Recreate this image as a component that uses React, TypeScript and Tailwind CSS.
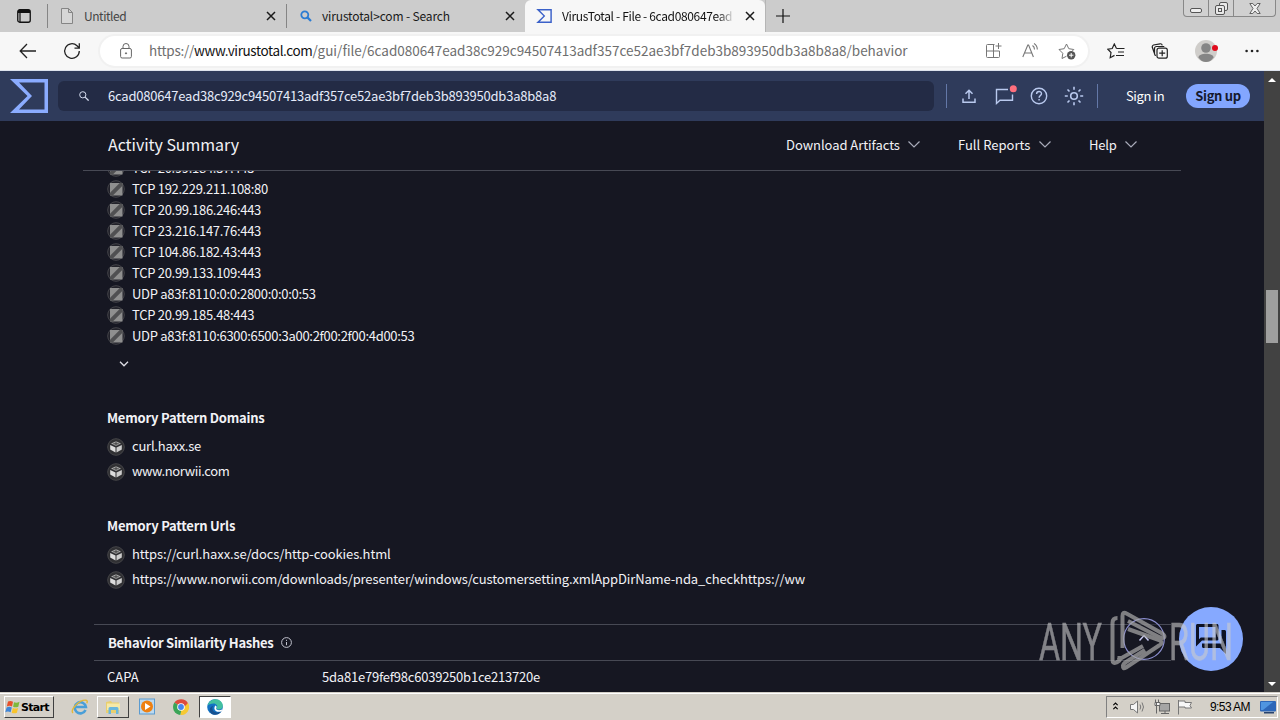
import { ReactElement, ReactNode } from 'react';
import clsx from 'clsx';

const contacted = [
  'TCP 20.99.184.37:443',
  'TCP 192.229.211.108:80',
  'TCP 20.99.186.246:443',
  'TCP 23.216.147.76:443',
  'TCP 104.86.182.43:443',
  'TCP 20.99.133.109:443',
  'UDP a83f:8110:0:0:2800:0:0:0:53',
  'TCP 20.99.185.48:443',
  'UDP a83f:8110:6300:6500:3a00:2f00:2f00:4d00:53',
];

function Close(): ReactElement {
  return (
    <svg className="h-2.5 w-2.5 shrink-0" viewBox="0 0 10 10" fill="none" stroke="#1a1a1a" strokeWidth="1.5">
      <path d="M1 1l8 8M9 1l-8 8" />
    </svg>
  );
}

function VtMark({ className }: { className: string }): ReactElement {
  return (
    <svg className={className} viewBox="0 0 38 34" fill="currentColor">
      <path fillRule="evenodd" d="M0 0h38v34H0l17.5-17zM9 3.5L22 17 9 30.500h25.500V3.500z" />
    </svg>
  );
}

function TabBar(): ReactElement {
  return (
    <div className="flex h-8 shrink-0 bg-[#cccccc] text-[12px] leading-none">
      <div className="flex w-[47px] items-center pl-[17px]">
        <svg className="h-3.5 w-3.5" viewBox="0 0 14 14" fill="none" stroke="#111">
          <rect x=".75" y=".75" width="12.500" height="12.500" rx="2" strokeWidth="1.300" />
          <path d="M1 2.500h12" strokeWidth="3" />
          <path d="M3 4v9" strokeWidth="1.200" />
        </svg>
      </div>
      <div className="flex w-[240px] items-center self-center border-x border-[#858585] py-1 pr-[10px] pl-3">
        <svg className="h-4 w-3.5" viewBox="0 0 14 16" fill="#d6d6d6" stroke="#858585">
          <path d="M1.500.5h7l4 4v11h-11zM8.500.5v4h4" />
        </svg>
        <span className="-mt-px ml-[10px] flex-1 tracking-[-0.45px] text-[#444]">Untitled</span>
        <Close />
      </div>
      <div className="flex w-[238px] items-center pr-[10px] pl-[13px]">
        <svg className="h-3 w-3" viewBox="0 0 12 12" fill="none" stroke="#2b7cd3" strokeWidth="1.800">
          <circle cx="4.800" cy="4.800" r="3.500" />
          <path d="M7.400 7.400l3.600 3.600" strokeWidth="2.200" />
        </svg>
        <span className="-mt-px ml-[10px] flex-1 tracking-[-0.15px] text-[#1a1a1a]">virustotal&gt;com - Search</span>
        <Close />
      </div>
      <div className="flex w-[240px] items-center rounded-t-md bg-[#f7f7f7] pr-[10px] pl-[11px]">
        <VtMark className="h-3.5 w-4 text-[#3b61c9]" />
        <span className="-mt-px ml-[10px] w-[173px] bg-gradient-to-r from-[#111] from-90% to-transparent bg-clip-text leading-5 tracking-[-0.35px] whitespace-nowrap text-transparent">
          VirusTotal - File - 6cad080647ead
        </span>
        <span className="ml-auto flex">
          <Close />
        </span>
      </div>
      <div className="flex flex-1 items-center border-l border-[#b5b5b5] pl-[10px]">
        <svg className="h-3.5 w-3.5" viewBox="0 0 14 14" stroke="#111" strokeWidth="1.200">
          <path d="M7 0v14M0 7h14" />
        </svg>
      </div>
      <div className="mr-[4px] flex h-[17px] w-[93px] rounded-b border border-t-0 border-[#888] bg-[#d0d0d0]">
        <div className="flex w-[25px] items-center justify-center border-r border-[#888]">
          <svg className="mt-1 h-[5px] w-3" viewBox="0 0 12 5" fill="#eee" stroke="#555">
            <rect x=".5" y=".5" width="11" height="4" rx="1.500" />
          </svg>
        </div>
        <div className="flex w-[25px] items-center justify-center border-r border-[#888]">
          <svg className="h-[13px] w-[13px]" viewBox="0 0 13 13" fill="#e8e8e8" stroke="#555">
            <rect x="4.500" y=".5" width="8" height="8" rx="1.500" />
            <rect x=".5" y="3.500" width="9" height="9" rx="1.500" />
            <rect x="3.500" y="6.500" width="3" height="3" />
          </svg>
        </div>
        <div className="flex flex-1 items-center justify-center">
          <svg className="h-[11px] w-[12px]" viewBox="0 0 12 11" fill="#eee" stroke="#555" strokeWidth=".9">
            <path d="M.8.500h3L6 3 8.200.500h3L8 5.500l3.200 5h-3L6 8l-2.200 2.500h-3L4 5.500z" />
          </svg>
        </div>
      </div>
    </div>
  );
}

function Toolbar(): ReactElement {
  return (
    <div className="flex h-[39px] shrink-0 items-center border-b border-[#dde3ee] bg-[#f7f7f7]">
      <svg className="ml-[19px] h-4 w-[18px]" viewBox="0 0 18 16" fill="none" stroke="#222" strokeWidth="1.300">
        <path d="M17 8H1.500M8 1L1.200 8 8 15" />
      </svg>
      <svg className="ml-[26px] h-[18px] w-[18px]" viewBox="0 0 18 18" fill="none" stroke="#222" strokeWidth="1.300">
        <path d="M16.300 9a7.300 7.300 0 1 1-2.300-5.300l2.200 2.200M16.300 1.200v4.900h-4.800" />
      </svg>
      <div className="ml-[19px] flex h-[30px] w-[988px] items-center rounded-full bg-white pl-5 ring-2 ring-[#f1f1f1]">
        <svg className="h-4 w-3" viewBox="0 0 12 16" fill="none" stroke="#666">
          <rect x=".6" y="5.500" width="10.800" height="9.500" rx="1.500" />
          <path d="M3 5.500v-2a3 3 0 0 1 6 0v2" />
          <circle cx="6" cy="10.300" r=".6" fill="#555" />
        </svg>
        <div className="ml-[17px] flex-1 text-[13.5px] leading-none whitespace-nowrap text-[#6e6e6e]">
          <span className="tracking-[-0.25px]">https://</span>
          <span className="tracking-[-0.38px] text-[#111]">www.virustotal.com</span>
          <span>/gui/file/6cad080647ead38c929c94507413adf357ce52ae3bf7deb3b893950db3a8b8a8/behavior</span>
        </div>
        <svg className="h-4 w-4" viewBox="0 0 16 16" fill="none" stroke="#777">
          <path d="M8.500 1.500h-7a1 1 0 0 0-1 1v11a1 1 0 0 0 1 1h11a1 1 0 0 0 1-1V8M.500 8h13M7.500 1.500v13M12.500 0v6M9.500 3h6" />
        </svg>
        <svg className="ml-5 h-4 w-[17px]" viewBox="0 0 17 16" fill="none" stroke="#777" strokeWidth="1.100">
          <path d="M.800 14L5.800 2h.800l4.800 12M2.600 10h7.200M10.500 2.500c1.500 1 2 2.200 2 4M12 .500c2.300 1.300 3.300 3.200 3.300 6" />
        </svg>
        <svg className="mr-3 ml-[19px] h-[18px] w-[18px]" viewBox="0 0 18 18" fill="none" stroke="#777">
          <path d="M8.500 14.200L4 16.500l.800-5.200L1 7.500l5.200-.8L8.500 2l2.300 4.700 5 .8-1.500 1.500" />
          <circle cx="13.200" cy="13.200" r="4.200" fill="#555" stroke="none" />
          <path d="M13.200 11v4.400M11 13.200h4.400" stroke="#fff" />
        </svg>
      </div>
      <svg className="ml-[19px] h-4 w-[18px]" viewBox="0 0 18 16" fill="none" stroke="#222" strokeWidth="1.200">
        <path d="M9.500 5.500L7.300 1 5.200 5.500.800 6.200 4 9.500 3.200 14.700l4.300-2.300M9.500 5.500h8M11 9h6M9 12.500h8" />
      </svg>
      <svg className="ml-[26px] h-4 w-[17px]" viewBox="0 0 17 16" fill="none" stroke="#222" strokeWidth="1.200">
        <path d="M3.500 10.500L1.300 4.300A2 2 0 0 1 2.500 2L9 .800c1.300-.2 2 .4 2.300 1.500M5 12.500c-1 0-1.500-1-1.500-2v-5a2 2 0 0 1 2-2h7.800" />
        <rect x="6" y="5.200" width="10.300" height="10" rx="2" />
        <path d="M11.200 7.200v6M8.200 10.200h6" />
      </svg>
      <svg className="ml-[27px] h-[22px] w-[23px]" viewBox="0 0 23 22">
        <circle cx="11" cy="11" r="11" fill="#cfcdca" />
        <circle cx="11" cy="8" r="4.800" fill="#858585" />
        <path d="M3.500 17.500c0-5 15-5 15 0C16.500 20.500 14 22 11 22s-5.500-1.500-7.500-4.500z" fill="#858585" />
        <circle cx="20" cy="8" r="3" fill="#e00b1c" />
      </svg>
      <svg className="ml-[27px] h-1 w-[14px]" viewBox="0 0 14 4" fill="#222">
        <circle cx="1.600" cy="2" r="1.300" />
        <circle cx="7" cy="2" r="1.300" />
        <circle cx="12.400" cy="2" r="1.300" />
      </svg>
    </div>
  );
}

function VtHeader(): ReactElement {
  return (
    <div className="flex h-[50px] shrink-0 items-center bg-[#2f3b5b] text-[13px] leading-none">
      <VtMark className="ml-[10px] h-[34px] w-[38px] text-[#8bacff]" />
      <div className="ml-[10px] flex h-[30px] w-[876px] items-center rounded-md bg-[#232b45] pl-[21px]">
        <svg className="h-[10px] w-[10px]" viewBox="0 0 10 10" fill="none" stroke="#d5dcef">
          <circle cx="3.800" cy="3.800" r="3.100" />
          <path d="M6.100 6.100l3.500 3.500" strokeWidth="1.300" />
        </svg>
        <span className="-mt-0.5 ml-[19px] tracking-[-0.21px] text-[#e6ebfa]">
          6cad080647ead38c929c94507413adf357ce52ae3bf7deb3b893950db3a8b8a8
        </span>
      </div>
      <div className="ml-3 h-6 w-px bg-[#6478a8]" />
      <svg className="ml-[15px] h-[14px] w-[14px]" viewBox="0 0 14 14" fill="none" stroke="#b9c9ee" strokeWidth="1.500">
        <path d="M7 10V1.500M3.500 4.800L7 1.300l3.500 3.500M1 9.500v3.700h12V9.500" />
      </svg>
      <svg className="ml-[19px] h-5 w-[22px] overflow-visible" viewBox="0 0 22 20" fill="none" stroke="#b9c9ee" strokeWidth="1.400">
        <path d="M13 3.500H1.500v14L5 14.200h12.500V8.500" />
        <circle cx="18.300" cy="2.800" r="3.500" fill="#ff6f7d" stroke="none" />
      </svg>
      <svg className="ml-[13px] h-[18px] w-[18px]" viewBox="0 0 18 18" fill="none" stroke="#b9c9ee" strokeWidth="1.400">
        <circle cx="9" cy="9" r="7.700" />
        <path d="M6.600 7c0-3.300 4.900-3.200 4.900-.3 0 1.800-2.400 1.900-2.400 4.100M9.100 12v1.600" />
      </svg>
      <svg className="ml-4 h-5 w-5" viewBox="0 0 20 20" fill="none" stroke="#b9c9ee" strokeWidth="1.600">
        <circle cx="10" cy="10" r="3.300" />
        <path d="M10 .800v3M10 16.200v3M.800 10h3M16.200 10h3M3.500 3.500l2 2M14.500 14.500l2 2M16.500 3.500l-2 2M5.500 14.500l-2 2" />
      </svg>
      <div className="ml-[13px] h-6 w-px bg-[#6478a8]" />
      <span className="-mt-0.5 ml-[28px] w-[38px] tracking-[-0.4px] whitespace-nowrap text-white">Sign in</span>
      <div className="ml-[22px] flex h-6 w-16 items-center justify-center rounded-full bg-[#83a6ff] pb-0.5 font-bold tracking-[-0.35px] whitespace-nowrap text-[#15192d]">
        Sign up
      </div>
    </div>
  );
}

function MenuItem({ label, className }: { label: string; className: string }): ReactElement {
  return (
    <div className={clsx('flex items-center justify-between whitespace-nowrap', className)}>
      <span className="-mt-0.5">{label}</span>
      <svg className="-mt-0.5 h-[7px] w-3" viewBox="0 0 12 7" fill="none" stroke="#a9acba" strokeWidth="1.200">
        <path d="M.500.500L6 6 11.500.500" />
      </svg>
    </div>
  );
}

function SignatureIcon(): ReactElement {
  return (
    <svg className="h-[18px] w-[18px] shrink-0" viewBox="0 0 18 18">
      <circle cx="9" cy="9" r="8.300" fill="#22222a" stroke="#45454a" />
      <rect x="3" y="3" width="12.500" height="12.500" fill="#8f8f8f" />
      <path d="M3 15.500v-2.800L12.700 3h2.800v2.800L5.800 15.500z" fill="#505052" />
    </svg>
  );
}

function CubeIcon(): ReactElement {
  return (
    <svg className="h-[18px] w-[18px] shrink-0" viewBox="0 0 18 18">
      <circle cx="9" cy="9" r="8.300" fill="#303033" stroke="#454548" />
      <path d="M9 3.200l5 2.300L9 8 4 5.500z" fill="#a8a8a8" />
      <path d="M3.200 7l5.300 2.600v4.900L3.200 11.500z" fill="#dcdcdc" />
      <path d="M14.800 7L9.500 9.600v4.900l5.300-3z" fill="#cdcdcd" />
      <path d="M9 3.500v4M6.300 5.800h5.400" stroke="#444" />
    </svg>
  );
}

function PatternRow({ children }: { children: ReactNode }): ReactElement {
  return (
    <div className="flex h-[25px] items-center gap-[7px] whitespace-nowrap">
      <CubeIcon />
      {children}
    </div>
  );
}

function Watermark(): ReactElement {
  return (
    <svg className="absolute top-[485px] left-[1035px] h-[70px] w-[205px]" viewBox="1035 606 205 70">
      <g fill="#cccccc" stroke="#cccccc" strokeWidth=".5" opacity=".6" fontFamily="Roboto, sans-serif" fontSize="51.500">
        <text x="1039" y="659.500" textLength="63" lengthAdjust="spacingAndGlyphs">ANY</text>
        <text x="1169" y="659.500" textLength="64" lengthAdjust="spacingAndGlyphs">RUN</text>
      </g>
      <g fill="none" stroke="#a8a8a8" strokeWidth="4" strokeLinejoin="round" opacity=".72">
        <path d="M1117.500 618q-5 0-5 5v37q0 4 4 2.500l3-2V656" />
        <path d="M1122.500 648v-32q0-5 4-2.500l35 19.500q4 2.500 2.500 4.500-2 1.500-5-.5l-31-16" />
        <path d="M1118 660l25-14M1128 629l31 11q5 2.500 0 5.500l-33 22q-3.500 2-3-1.500 0-2 3-4l19-12" />
      </g>
    </svg>
  );
}

function Report(): ReactElement {
  return (
    <div className="relative flex-1 overflow-hidden bg-[#161722] text-[13px] leading-none text-[#f2f2f6]">
      <div className="ml-[83px] flex h-[50px] w-[1098px] items-center border-b border-[#474954] pl-[25px]">
        <span className="-mt-[3px] w-[678px] text-[16px] tracking-[-0.05px]">Activity Summary</span>
        <MenuItem label="Download Artifacts" className="w-[134px] tracking-[-0.05px]" />
        <MenuItem label="Full Reports" className="ml-[38px] w-[93px]" />
        <MenuItem label="Help" className="ml-[38px] w-12 tracking-[-0.2px]" />
      </div>
      <div className="overflow-hidden pl-[107px]">
        <div className="-mt-[14px]">
          {contacted.map((entry) => (
            <div key={entry} className="flex h-[21px] items-center gap-[7px] tracking-[-0.29px] whitespace-nowrap">
              <SignatureIcon />
              <span className="-mt-px">{entry}</span>
            </div>
          ))}
        </div>
        <svg className="mt-[15px] ml-[12px] h-[6px] w-[10px]" viewBox="0 0 10 6" fill="none" stroke="#dedee6" strokeWidth="1.300">
          <path d="M1 .800l4 4 4-4" />
        </svg>
        <h2 className="mt-[41px] mb-[6px] leading-5 font-bold tracking-[-0.22px]">Memory Pattern Domains</h2>
        <PatternRow>
          <span className="-mt-0.5 tracking-[-0.23px]">curl.haxx.se</span>
        </PatternRow>
        <PatternRow>
          <span className="-mt-0.5 tracking-[-0.38px]">www.norwii.com</span>
        </PatternRow>
        <h2 className="mt-8 mb-[6px] leading-5 font-bold tracking-[-0.2px]">Memory Pattern Urls</h2>
        <PatternRow>
          <span className="-mt-0.5 tracking-[-0.11px]">https://curl.haxx.se/docs/http-cookies.html</span>
        </PatternRow>
        <PatternRow>
          <span className="-mt-0.5 tracking-[-0.127px]">
            https://www.norwii.com/downloads/presenter/windows/customersetting.xmlAppDirName-nda_checkhttps://ww
          </span>
        </PatternRow>
      </div>
      <div className="mt-8 ml-[94px] w-[1077px] border-t border-[#474954]">
        <div className="flex h-9 items-center border-b border-[#474954] pl-[14px] font-bold tracking-[-0.28px]">
          Behavior Similarity Hashes
          <svg className="ml-2 h-[11px] w-[11px]" viewBox="0 0 11 11" fill="none" stroke="#c3c4cf">
            <circle cx="5.500" cy="5.500" r="4.900" />
            <path d="M5.500 5v3.200M5.500 2.800v1.100" />
          </svg>
        </div>
        <div className="flex h-[30px] items-center pl-[13px]">
          <span className="w-[215px]">CAPA</span>
          <span className="tracking-[-0.22px]">5da81e79fef98c6039250b1ce213720e</span>
        </div>
      </div>

      <svg className="absolute top-[497px] left-[1123px] h-[42px] w-[42px]" viewBox="0 0 42 42" fill="none">
        <circle cx="21" cy="21" r="20.300" fill="#161722" fillOpacity=".5" stroke="#8c8fd0" strokeWidth="1.200" />
        <path d="M16.500 22.500L21 17.500l4.500 5" stroke="#c9cbf5" strokeWidth="1.500" />
      </svg>
      <div className="absolute top-[486px] left-[1179px] flex h-16 w-16 items-center justify-center rounded-full bg-[#86a9ff]">
        <svg className="h-9 w-9" viewBox="0 0 24 24" fill="#0d1224">
          <path d="M15 4v7H5.170L4 12.170V4h11m1-2H3c-.55 0-1 .45-1 1v14l4-4h10c.55 0 1-.45 1-1V3c0-.55-.45-1-1-1zm5 4h-2v9H6v2c0 .55.45 1 1 1h11l4 4V7c0-.55-.45-1-1-1z" />
        </svg>
      </div>
      <Watermark />
    </div>
  );
}

function Scrollbar(): ReactElement {
  return (
    <div className="flex w-4 shrink-0 flex-col items-center bg-[#424242]">
      <svg className="mt-[7px] h-1 w-2" viewBox="0 0 8 4" fill="#fff">
        <path d="M4 0l4 4H0z" />
      </svg>
      <div className="mt-[208px] h-[53px] w-3 bg-[#9f9f9f]" />
      <svg className="mt-auto mb-[6px] h-1 w-2" viewBox="0 0 8 4" fill="#fff">
        <path d="M0 0h8L4 4z" />
      </svg>
    </div>
  );
}

function Taskbar(): ReactElement {
  return (
    <div className="flex h-7 shrink-0 items-center border-t border-[#d4d0c8] bg-[#d4d0c8] font-['Liberation_Sans',sans-serif] text-black shadow-[inset_0_1px_0_#fff]">
      <div className="mt-[1px] ml-1 flex h-[22px] w-[50px] items-center border border-t-white border-r-[#404040] border-b-[#404040] border-l-white">
        <svg className="h-4 w-4 shrink-0" viewBox="0 0 16 16">
          <path d="M3 2.500q2.500-1.200 5 .2L7 7.500q-2.500-1.300-5.200 0z" fill="#e8502a" />
          <path d="M9 3.200q2.500 1.200 5.500-.5l-1.200 5q-2.600 1.300-5.200 0z" fill="#7eb83a" />
          <path d="M1.600 8.500q2.600-1.300 5.200 0l-1.200 4.800Q3 12 .300 13.200z" fill="#3f86d8" />
          <path d="M7.900 9q2.500 1.200 5.200 0l-1.200 4.700q-2.600 1.300-5.200 0z" fill="#f8c42c" />
        </svg>
        <span className="font-['DejaVu_Sans',sans-serif] text-[11px] leading-none font-bold tracking-[-0.7px]">Start</span>
      </div>
      <svg className="ml-[17px] h-[18px] w-[18px]" viewBox="0 0 18 18" fill="none">
        <path d="M14.500 12a5.600 5.600 0 1 1 .4-3H5" stroke="#4a9fd8" strokeWidth="2.600" />
        <path d="M2 15C-1 12 8 1.500 15 2.200q2 .3.800 3" stroke="#e3b83a" strokeWidth="1.400" />
      </svg>
      <div className="mt-[1px] ml-2 flex h-[22px] w-8 items-center justify-center border border-t-white border-r-[#404040] border-b-[#404040] border-l-white">
        <svg className="h-4 w-4" viewBox="0 0 16 16">
          <path d="M1 3l5-1 1 1.500h7V14H1z" fill="#e9cf6e" />
          <path d="M2 4.500h13V11H2z" fill="#f6e9a8" />
          <path d="M3.500 15V9.500q0-1.500 1.500-1.500h7q1.500 0 1.500 1.500V15H11v-4H6v4z" fill="#6ab7dd" />
        </svg>
      </div>
      <svg className="ml-[10px] h-[17px] w-4" viewBox="0 0 16 17">
        <rect x=".5" y="1" width="15" height="15" fill="#bcd9f0" stroke="#5b9bd0" />
        <circle cx="8" cy="8.500" r="6" fill="#ee8012" />
        <path d="M6 5l5.500 3.500L6 12z" fill="#fff" />
      </svg>
      <svg className="ml-[18px] h-4 w-4" viewBox="0 0 16 16">
        <path d="M8 8L1.400 3.600A8 8 0 0 1 15 4.300z" fill="#dd4b3e" />
        <path d="M8 8l7-4A8 8 0 0 1 7.500 16z" fill="#f6c933" />
        <path d="M8 8l.2 4-1 4A8 8 0 0 1 1.400 3.600z" fill="#3aa457" />
        <path d="M8 4.300h7.100L15 4 11.200 8z" fill="#dd4b3e" />
        <circle cx="8" cy="8" r="3.800" fill="#fff" />
        <circle cx="8" cy="8" r="2.900" fill="#4686ee" />
      </svg>
      <div className="mt-[1px] ml-[10px] flex h-[22px] w-8 items-center justify-center border border-t-[#404040] border-r-white border-b-white border-l-[#404040] bg-white">
        <svg className="h-4 w-4" viewBox="0 0 16 16">
          <circle cx="8" cy="8" r="7.800" fill="#1272c4" />
          <path d="M.500 6.500C2 1.500 6 .200 8.500.200c4.500 0 7.500 3.500 7.300 6.800-.2 2.500-2 3.500-4 3.500-2.500 0-2.800-1-2-1.900C11 7 9.500 4.500 6.500 4.500 3.500 4.500 1.500 5.500.500 6.500z" fill="#43c0a0" />
          <path d="M6.500 6.500c-3 3 0 8 5 6.800 1.500-.4 2.500-1 3-1.300-3 5-9 4.700-11 1.500-2-3 0-6 3-7z" fill="#17508f" />
          <path d="M8.600 6.500c1.500 1 1 2 .6 2.800-.4 1 .8 1.900 3 1.900 1.500 0 2.700-.5 3.300-1.200l-.8 2.200c-3 1.300-7 .5-7.300-2.500-.1-1.300.4-2.500 1.200-3.200z" fill="#fff" />
        </svg>
      </div>
      <div className="mt-[1px] mr-[2px] ml-auto flex h-[22px] w-[172px] items-center border border-t-[#808080] border-r-white border-b-white border-l-[#808080] pl-[6px]">
        <svg className="-mt-0.5 h-2 w-[5px]" viewBox="0 0 5 8" fill="none" stroke="#000" strokeWidth="1.200">
          <path d="M.300 3.200l2.200-2.200 2.200 2.200M.300 7.200l2.200-2.200 2.200 2.200" />
        </svg>
        <svg className="ml-[12px] h-4 w-4" viewBox="0 0 16 16" fill="#f5f5f5" stroke="#777">
          <path d="M.500 5.500h3L7.500 2v12l-4-3.500h-3z" />
          <path d="M10 5.500q1.500 2.500 0 5M12 3.500q3 4.500 0 9" fill="none" />
        </svg>
        <svg className="ml-2 h-4 w-[17px]" viewBox="0 0 17 16" fill="#f5f5f5" stroke="#666">
          <rect x="5.500" y="4.500" width="10" height="7.500" fill="#a5a5a5" />
          <path d="M7 14.500h8M11 12v2.500M1.500.500v3h1v11M4.500.500v3h-1M1 3.500h5v3H1z" />
        </svg>
        <svg className="ml-[6px] h-4 w-4" viewBox="0 0 16 16" fill="#f7f7f7" stroke="#777">
          <path d="M1.500 1v14.500M1.500 2h6.500v1.500h6.500L13 6.500l1.500 2.500H8V8H1.500z" />
        </svg>
        <span className="ml-[17px] text-[12px] leading-none tracking-[-0.6px] whitespace-nowrap">9:53 AM</span>
        <svg className="mr-px ml-auto h-[13px] w-4" viewBox="0 0 16 13">
          <rect width="16" height="10.500" rx="1" fill="#2d67b8" />
          <path d="M1 1h12L3 9H1z" fill="#4f95e0" />
          <path d="M4 11h10v1.500H4z" fill="#27436e" />
        </svg>
      </div>
    </div>
  );
}

export default function App(): ReactElement {
  return (
    <div className="flex h-[720px] w-[1280px] flex-col overflow-hidden font-['Noto_Sans_CJK_SC',sans-serif]">
      <TabBar />
      <Toolbar />
      <div className="flex min-h-0 flex-1">
        <div className="flex min-w-0 flex-1 flex-col">
          <VtHeader />
          <Report />
        </div>
        <Scrollbar />
      </div>
      <Taskbar />
    </div>
  );
}
